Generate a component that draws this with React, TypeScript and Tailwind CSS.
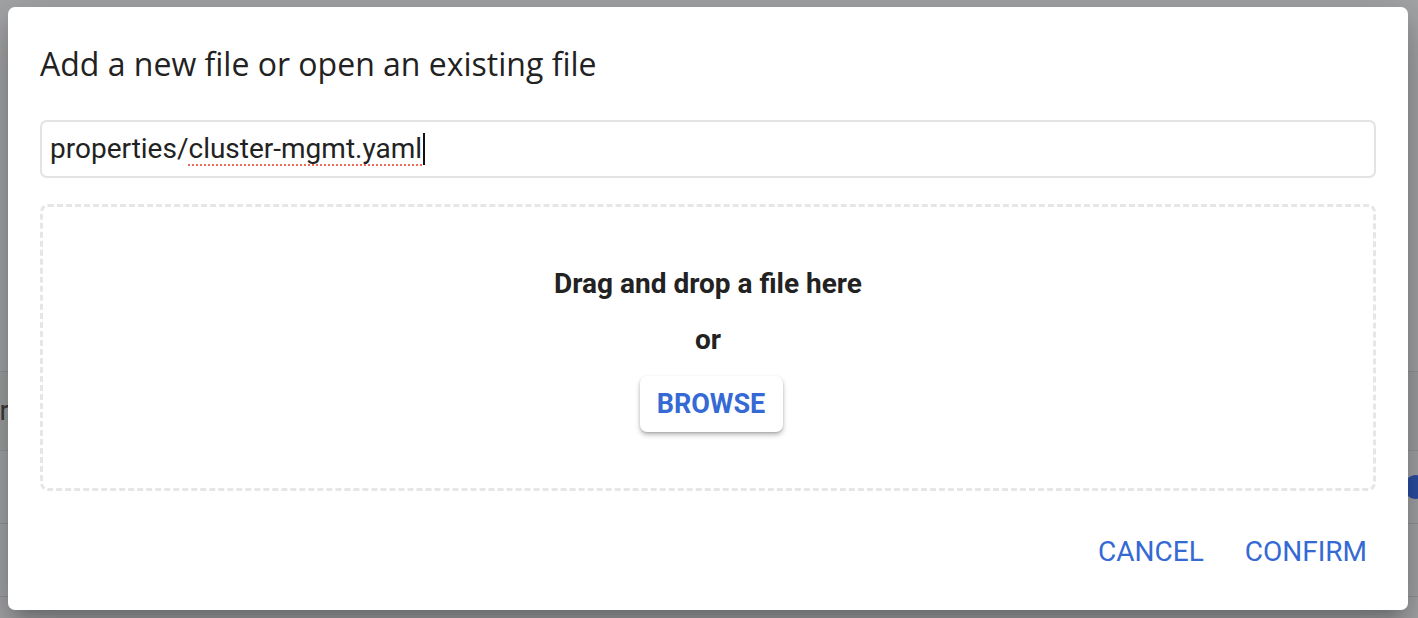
import React from "react";

export default function App() {
  return (
    <div className="relative h-[618px] w-[1418px] overflow-hidden bg-[#a4a5a7] font-['Roboto',sans-serif]">
      {/* page behind the overlay */}
      <div className="flex flex-col pt-[371px]">
        <div className="flex h-[80px] items-center border-y border-[#94969a] bg-[#9fa0a2]">
          <div className="flex w-[9px] justify-end overflow-hidden">
            <span className="whitespace-nowrap text-[28px] text-[#3a3b3d]">Folder</span>
          </div>
        </div>
        <div className="flex h-[73px] items-center justify-end border-b border-[#94969a]">
          <span className="-mr-[10px] h-[24px] w-[24px] rounded-full bg-[#2c4fa6]" />
        </div>
        <div className="h-[73px] border-b border-[#94969a]" />
      </div>

      {/* dialog */}
      <div className="absolute left-[8px] top-[7px] flex h-[603px] w-[1400px] flex-col rounded-[7px] bg-white px-[32px] shadow-[0_11px_15px_-7px_rgba(0,0,0,0.2),0_24px_38px_3px_rgba(0,0,0,0.14),0_9px_46px_8px_rgba(0,0,0,0.12)]">
        <h2 className="pt-[36px] font-['Open_Sans',sans-serif] text-[32px] leading-[42px] text-[#222]">
          Add a new file or open an existing file
        </h2>

        <div className="mt-[35px] flex h-[58px] items-center rounded-[7px] border-2 border-[#e3e3e3] px-[8px]">
          <span className="text-[28px] leading-none text-[#222]">
            properties/
            <span className="underline decoration-[#ec6a5e] decoration-dotted decoration-2 underline-offset-[6px]">
              cluster-mgmt.yaml
            </span>
          </span>
          <span className="ml-[1px] h-[32px] w-[2px] bg-[#111]" />
        </div>

        <div className="mt-[26px] flex h-[287px] flex-col items-center rounded-[8px] border-[3px] border-dashed border-[#e6e6e6]">
          <p className="mt-[61px] text-[28px] font-bold leading-[32px] text-[#222]">Drag and drop a file here</p>
          <p className="mt-[24px] text-[28px] font-bold leading-[32px] text-[#222]">or</p>
          <button className="ml-[6px] mt-[20px] h-[56px] w-[143px] rounded-[7px] bg-white text-[27px] font-bold text-[#3569d4] shadow-[0_3px_5px_rgba(0,0,0,0.25),0_1px_2px_rgba(0,0,0,0.15)]">
            BROWSE
          </button>
        </div>

        <div className="mt-[45px] flex justify-end gap-[41px] pr-[9px]">
          <button className="text-[28px] leading-[32px] text-[#3569d4]">CANCEL</button>
          <button className="text-[28px] leading-[32px] text-[#3569d4]">CONFIRM</button>
        </div>
      </div>
    </div>
  );
}
